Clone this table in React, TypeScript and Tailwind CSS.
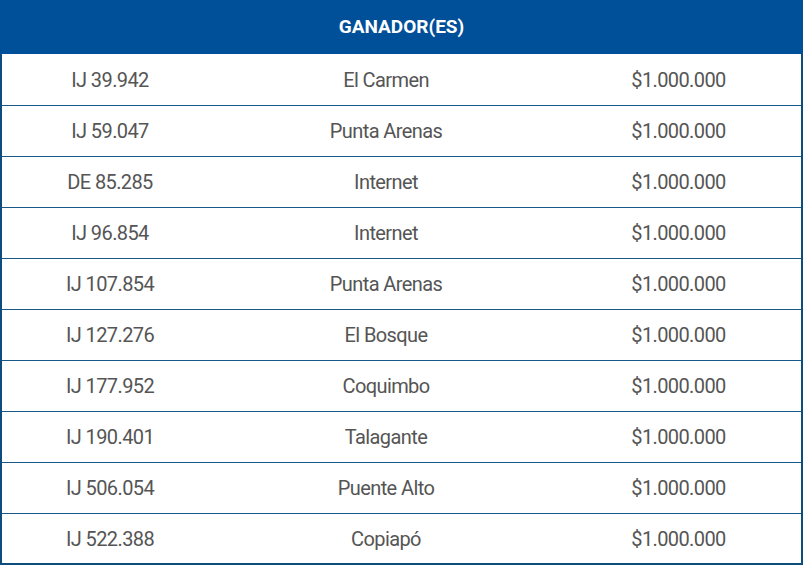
import React from "react";

const rows = [
  ["IJ 39.942", "El Carmen"],
  ["IJ 59.047", "Punta Arenas"],
  ["DE 85.285", "Internet"],
  ["IJ 96.854", "Internet"],
  ["IJ 107.854", "Punta Arenas"],
  ["IJ 127.276", "El Bosque"],
  ["IJ 177.952", "Coquimbo"],
  ["IJ 190.401", "Talagante"],
  ["IJ 506.054", "Puente Alto"],
  ["IJ 522.388", "Copiapó"],
];

export default function App() {
  return (
    <div className="w-[803px] h-[565px] bg-white" style={{ fontFamily: "Roboto, 'Liberation Sans', sans-serif" }}>
      <div className="h-[54px] bg-[#004f99] flex items-center justify-center text-white font-bold text-[19px]">
        GANADOR(ES)
      </div>
      <div className="border-x-2 border-b-2 border-[#0d4d7d] h-[511px] flex flex-col">
        {rows.map(([code, place], i) => (
          <div
            key={i}
            className={`flex items-center text-[20px] leading-none tracking-[-0.6px] text-[#555555] ${
              i === 0
                ? "h-[52px] border-b border-[#17598a]"
                : i < rows.length - 1
                ? "h-[51px] border-b border-[#17598a]"
                : "flex-1"
            }`}
          >
            <div className="w-[216px] text-center">{code}</div>
            <div className="w-[336px] text-center">{place}</div>
            <div className="flex-1 text-center pl-[2px]">$1.000.000</div>
          </div>
        ))}
      </div>
    </div>
  );
}
